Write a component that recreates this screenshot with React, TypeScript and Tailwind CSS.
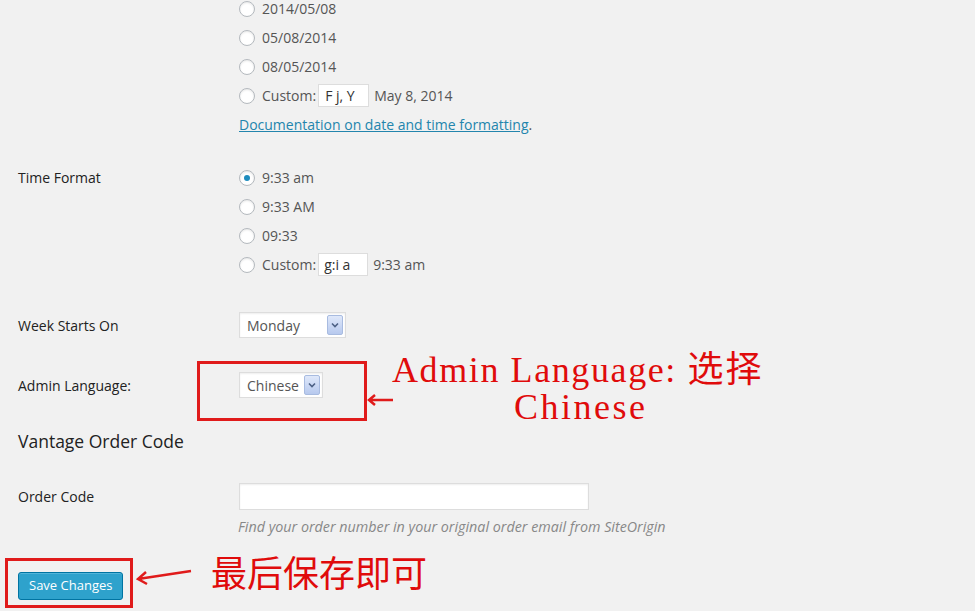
import React from "react";

const radioRow = "flex h-[29px] items-center";

function Radio({ checked = false }: { checked?: boolean }) {
  return (
    <span className="mr-[7px] flex h-[16px] w-[16px] shrink-0 items-center justify-center rounded-full border border-[#b4b9be] bg-white shadow-[inset_0_1px_2px_rgba(0,0,0,0.1)]">
      {checked && <span className="h-[6px] w-[6px] rounded-full bg-[#1e8cbe]" />}
    </span>
  );
}

function SelectBox({ value, width }: { value: string; width: string }) {
  return (
    <div className={`flex h-[26px] items-center justify-between border border-[#dddddd] bg-white pl-[7px] pr-[2px] shadow-[inset_0_1px_2px_rgba(0,0,0,0.07)] ${width}`}>
      <span className="text-[14px] text-[#555]">{value}</span>
      <span className="flex h-[20px] w-[16px] items-center justify-center rounded-[2px] border border-[#a8bbe0] bg-gradient-to-b from-[#dfe8fa] to-[#b7c9ee]">
        <svg width="8" height="6" viewBox="0 0 8 6">
          <path d="M1 1.5 L4 4.5 L7 1.5" fill="none" stroke="#4d6185" strokeWidth="1.6" />
        </svg>
      </span>
    </div>
  );
}

export default function App() {
  return (
    <div className="relative h-[611px] w-[975px] overflow-hidden bg-[#f1f1f1] font-['Open_Sans',sans-serif] text-[14px] text-[#444]">
      <div className="flex flex-col pl-[18px]">
        {/* Date format */}
        <div className="mt-[-6px] flex">
          <div className="w-[221px]" />
          <div className="flex flex-col text-[#555]">
            <div className={radioRow}><Radio />2014/05/08</div>
            <div className={radioRow}><Radio />05/08/2014</div>
            <div className={radioRow}><Radio />08/05/2014</div>
            <div className={radioRow}>
              <Radio />Custom:
              <span className="ml-[2px] flex h-[23px] w-[51px] items-center border border-[#dddddd] bg-white pl-[6px] text-[#333]">F j, Y</span>
              <span className="ml-[5px]">May 8, 2014</span>
            </div>
            <div className="flex h-[29px] items-center">
              <a className="text-[#2385ad] underline">Documentation on date and time formatting</a>.
            </div>
          </div>
        </div>

        {/* Time format */}
        <div className="mt-[24px] flex">
          <div className="flex h-[29px] w-[221px] items-center text-[#222]">Time Format</div>
          <div className="flex flex-col text-[#555]">
            <div className={radioRow}><Radio checked />9:33 am</div>
            <div className={radioRow}><Radio />9:33 AM</div>
            <div className={radioRow}><Radio />09:33</div>
            <div className={radioRow}>
              <Radio />Custom:
              <span className="ml-[2px] flex h-[23px] w-[50px] items-center border border-[#dddddd] bg-white pl-[5px] text-[#333]">g:i a</span>
              <span className="ml-[5px]">9:33 am</span>
            </div>
          </div>
        </div>

        {/* Week starts */}
        <div className="mt-[33px] flex items-center">
          <div className="w-[221px] text-[#222]">Week Starts On</div>
          <SelectBox value="Monday" width="w-[107px]" />
        </div>

        {/* Admin language */}
        <div className="mt-[34px] flex items-center">
          <div className="w-[221px] text-[#222]">Admin Language:</div>
          <SelectBox value="Chinese" width="w-[84px]" />
        </div>

        <h3 className="mt-[31px] h-[24px] text-[17.5px] leading-[24px] text-[#222]">Vantage Order Code</h3>

        {/* Order code */}
        <div className="mt-[30px] flex items-center">
          <div className="w-[221px] text-[#222]">Order Code</div>
          <div className="h-[27px] w-[350px] border border-[#dddddd] bg-white shadow-[inset_0_1px_2px_rgba(0,0,0,0.07)]" />
        </div>
        <div className="mt-[7px] flex">
          <div className="w-[220px]" />
          <p className="text-[14.3px] leading-[20px] italic text-[#888]">Find your order number in your original order email from SiteOrigin</p>
        </div>

        <div className="mt-[35px]">
          <button className="h-[28px] rounded-[3px] border border-[#0074a2] bg-[#2ea2cc] px-[10px] text-[13px] text-white shadow-[inset_0_1px_0_rgba(120,200,230,0.5)]">
            Save Changes
          </button>
        </div>
      </div>

      {/* Annotations */}
      <div className="absolute left-[197px] top-[361px] h-[60px] w-[170px] border-[3px] border-[#e01b1b]" />
      <svg className="absolute left-[366px] top-[392px]" width="28" height="16" viewBox="0 0 28 16">
        <path d="M27 8 H3 M9 3 L3 8 L9 13" fill="none" stroke="#e01b1b" strokeWidth="2.5" />
      </svg>
      <div className="absolute left-[392px] top-[354px] whitespace-nowrap font-['Liberation_Serif','Noto_Sans_CJK_SC',serif] text-[36px] leading-[32px] tracking-[1.6px] text-[#e00b0b]">
        Admin Language: <span className="tracking-[2px]">选择</span>
      </div>
      <div className="absolute left-[514px] top-[391px] whitespace-nowrap font-['Liberation_Serif',serif] text-[36px] leading-[32px] tracking-[2.5px] text-[#e00b0b]">
        Chinese
      </div>

      <div className="absolute left-[5px] top-[558px] h-[50px] w-[128px] border-[3px] border-[#e01b1b]" />
      <svg className="absolute left-[134px] top-[566px]" width="60" height="20" viewBox="0 0 60 20">
        <path d="M57 5 L4 13 M12 6 L4 13 L13 18" fill="none" stroke="#e01b1b" strokeWidth="2.5" />
      </svg>
      <div className="absolute left-[211px] top-[548px] font-['Noto_Sans_CJK_SC',sans-serif] text-[36px] leading-[46px] text-[#e00b0b]">
        最后保存即可
      </div>
    </div>
  );
}
